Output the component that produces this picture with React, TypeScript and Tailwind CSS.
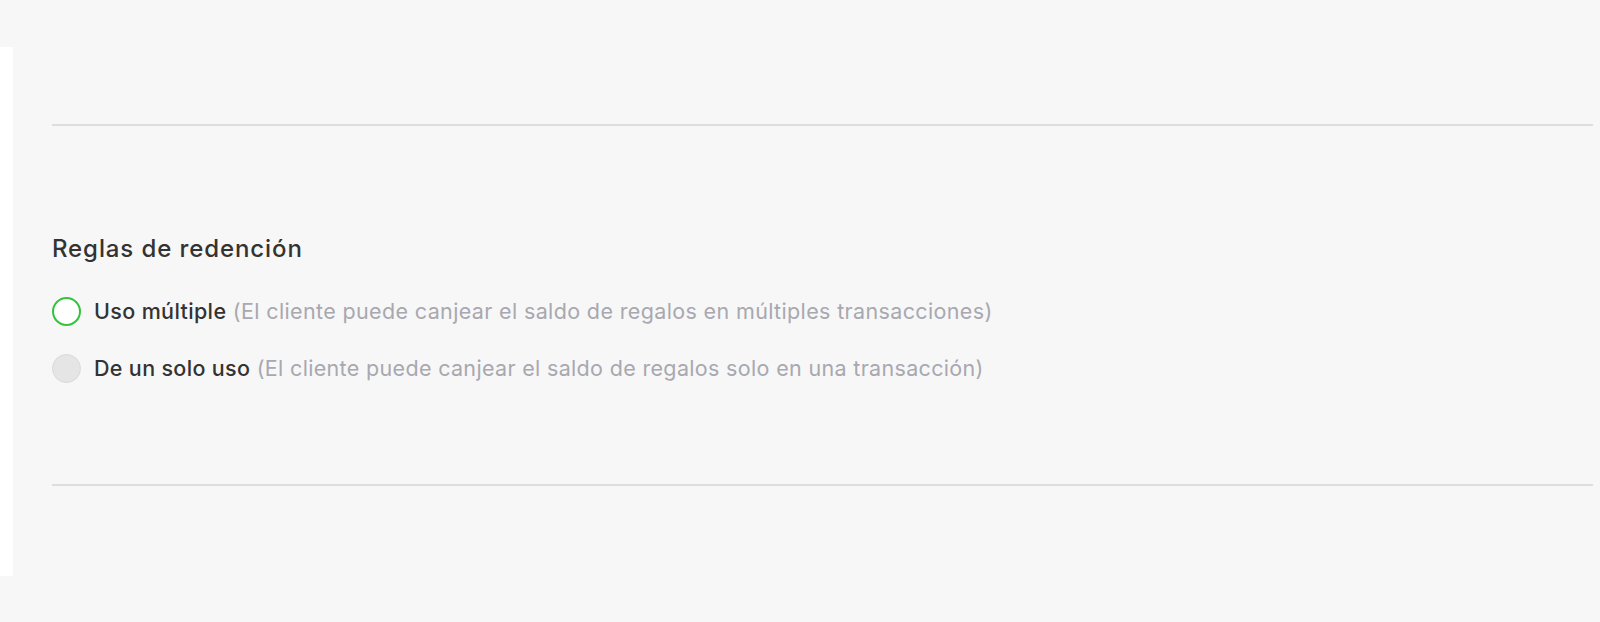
import React from "react";

export default function App() {
  return (
    <div className="w-[1600px] h-[622px] bg-[#f7f7f7] flex overflow-hidden" style={{ fontFamily: "Inter, 'Noto Sans', sans-serif" }}>
      <div className="mt-[47px] w-[13px] h-[529px] bg-white shrink-0" />
      <div className="flex-1 pl-[39px] pr-[7px] pt-[124px]">
        <div className="h-[2px] bg-[#dedede]" />
        <div className="pt-[108px] pb-[101px]">
          <h2 className="text-[24px] font-medium text-[#333333] leading-[30px] tracking-[0.9px]">Reglas de redención</h2>
          <div className="mt-[33px] flex flex-col gap-[28px]">
            <label className="flex items-center gap-[13px] h-[29px]">
              <span className="w-[29px] h-[29px] rounded-full border-[2.5px] border-[#33c43b] bg-white shrink-0" />
              <span className="text-[21.5px] leading-[29px] tracking-[0.36px] whitespace-nowrap">
                <span className="text-[#333333] font-medium">Uso múltiple</span>{" "}
                <span className="text-[#a8a8b0]">(El cliente puede canjear el saldo de regalos en múltiples transacciones)</span>
              </span>
            </label>
            <label className="flex items-center gap-[13px] h-[29px]">
              <span className="w-[29px] h-[29px] rounded-full border border-[#dadada] bg-[#e5e5e5] shrink-0" />
              <span className="text-[21.5px] leading-[29px] tracking-[0.33px] whitespace-nowrap">
                <span className="text-[#333333] font-medium">De un solo uso</span>{" "}
                <span className="text-[#a8a8b0]">(El cliente puede canjear el saldo de regalos solo en una transacción)</span>
              </span>
            </label>
          </div>
        </div>
        <div className="h-[2px] bg-[#dedede]" />
      </div>
    </div>
  );
}
